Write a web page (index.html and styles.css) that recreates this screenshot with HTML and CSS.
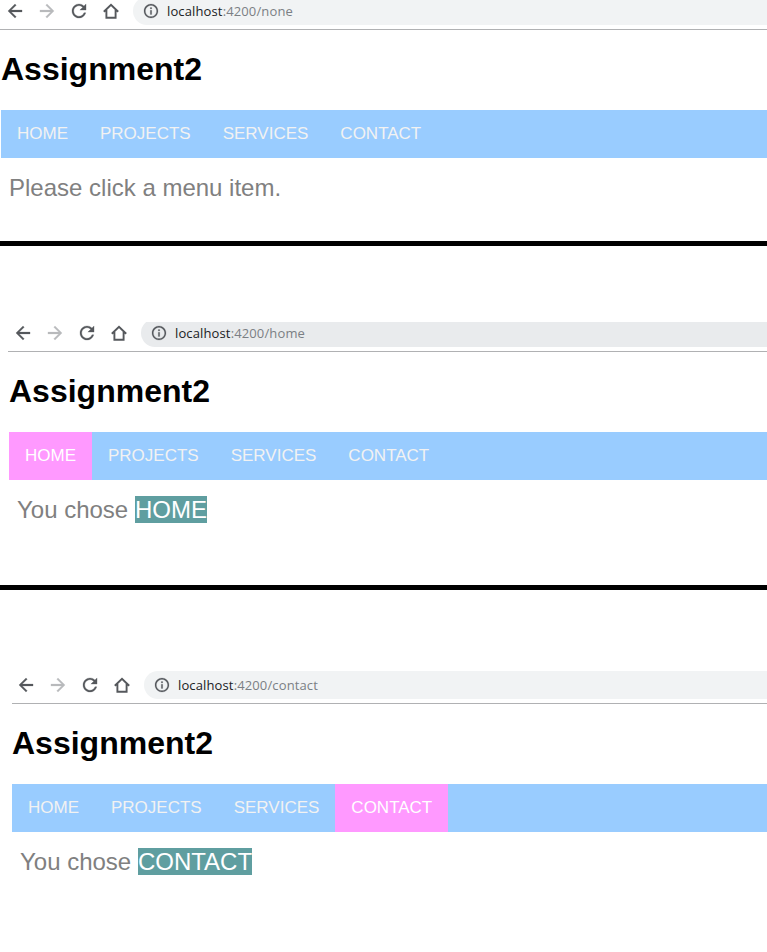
FILE: index.html
```html
<!DOCTYPE html>
<html lang="en">
<head>
<meta charset="utf-8">
<title>Assignment2</title>
<link rel="stylesheet" href="styles.css">
</head>
<body>
<svg class="defs" width="0" height="0">
<symbol id="back" viewBox="2.9 2.9 18.2 18.2"><path class="solid" d="M20 11H7.83l5.59-5.59L12 4l-8 8 8 8 1.41-1.41L7.83 13H20v-2z"/></symbol>
<symbol id="forward" viewBox="2.9 2.9 18.2 18.2"><path class="solid" d="M12 4l-1.41 1.41L16.17 11H4v2h12.17l-5.58 5.59L12 20l8-8z"/></symbol>
<symbol id="reload" viewBox="2.9 2.9 18.2 18.2"><path class="solid" d="M17.65 6.35C16.2 4.9 14.21 4 12 4c-4.42 0-7.99 3.58-7.99 8s3.57 8 7.99 8c3.73 0 6.84-2.55 7.73-6h-2.08c-.82 2.33-3.04 4-5.65 4-3.31 0-6-2.69-6-6s2.69-6 6-6c1.66 0 3.14.69 4.22 1.78L13 11h7V4l-2.35 2.35z"/></symbol>
<symbol id="house" viewBox="0 0 16 16"><path d="M0.8 8.7L8 1.7L15.2 8.7M3.4 7V14.8H12.6V7"/></symbol>
<symbol id="info" viewBox="0.6 0.6 22.8 22.8"><path class="solid" d="M11 7h2v2h-2zm0 4h2v6h-2zm1-9C6.48 2 2 6.48 2 12s4.48 10 10 10 10-4.48 10-10S17.52 2 12 2zm0 18c-4.41 0-8-3.59-8-8s3.59-8 8-8 8 3.59 8 8-3.59 8-8 8z"/></symbol>
</svg>
<section class="shot first">
<div class="browser"><svg><use href="#back"/></svg><svg class="dim"><use href="#forward"/></svg><svg><use href="#reload"/></svg><svg><use href="#house"/></svg><div class="address"><svg><use href="#info"/></svg><span class="url"><b>localhost</b>:4200/none</span></div></div>
<h1>Assignment2</h1>
<nav><a>HOME</a><a>PROJECTS</a><a>SERVICES</a><a>CONTACT</a></nav>
<p>Please click a menu item.</p>
</section>
<section class="shot second">
<div class="browser"><svg><use href="#back"/></svg><svg class="dim"><use href="#forward"/></svg><svg><use href="#reload"/></svg><svg><use href="#house"/></svg><div class="address hover"><svg><use href="#info"/></svg><span class="url"><b>localhost</b>:4200/home</span></div></div>
<h1>Assignment2</h1>
<nav><a class="active">HOME</a><a>PROJECTS</a><a>SERVICES</a><a>CONTACT</a></nav>
<p>You chose <mark>HOME</mark></p>
</section>
<section class="shot third">
<div class="browser"><svg><use href="#back"/></svg><svg class="dim"><use href="#forward"/></svg><svg><use href="#reload"/></svg><svg><use href="#house"/></svg><div class="address"><svg><use href="#info"/></svg><span class="url"><b>localhost</b>:4200/contact</span></div></div>
<h1>Assignment2</h1>
<nav><a>HOME</a><a>PROJECTS</a><a>SERVICES</a><a class="active">CONTACT</a></nav>
<p>You chose <mark>CONTACT</mark></p>
</section>
</body>
</html>
```
FILE: styles.css
```css
* { box-sizing: border-box; }
body { margin: 0; background: #fff; font-family: "Liberation Sans", Arial, sans-serif; overflow: hidden; }
.defs { display: block; height: 0; }
.shot { border-bottom: 5px solid #000; }
.first { height: 246px; }
.second { height: 344px; padding: 76px 0 0 8px; }
.third { height: 362px; padding: 81px 0 0 11px; border: 0; }
.browser { display: flex; align-items: center; height: 30px; padding: 0 0 7px 7px; border-bottom: 1px solid #b0b1b3; overflow: hidden; }
.third .browser { height: 33px; margin-left: 1px; padding: 0 0 4px 6px; }
.browser svg { width: 16px; height: 16px; margin-right: 16px; flex: none; color: #55585c; fill: none; stroke: currentColor; stroke-width: 1.9; }
.browser svg.dim { color: #b8babc; }
.solid { fill: currentColor; stroke: currentColor; stroke-width: 0.3; }
.address { display: flex; align-items: center; flex: 1; height: 28px; margin-left: -2px; padding-left: 10px; border-radius: 14px 0 0 14px; background: #f1f3f4; }
.address.hover { background: #e9ebed; }
.browser .address svg { margin-right: 8px; }
.url { font: 13px/18px "Open Sans", sans-serif; letter-spacing: 0.13px; color: #7b7f84; }
.url b { font-weight: 400; color: #202124; }
h1 { margin: 20px 0 21px 1px; font-size: 32px; line-height: 39px; }
nav { display: flex; height: 48px; margin-left: 1px; background: #9cf; }
nav a { padding: 0 16px; font-size: 17px; line-height: 47px; color: #f2f2f2; }
nav .active { color: #fff; background: #f9f; }
p { margin: 16px 0 0 9px; font-size: 24px; line-height: 28px; color: #808080; }
mark { color: #fff; background: #5f9ea0; }
```
